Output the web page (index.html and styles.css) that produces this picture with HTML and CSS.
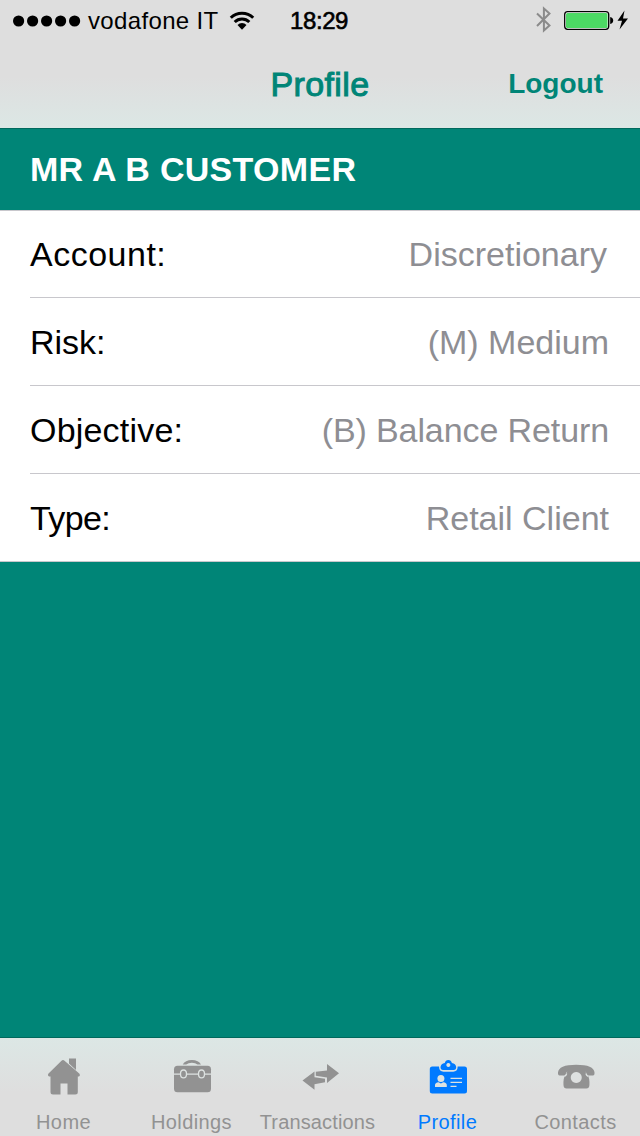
FILE: index.html
```
<!DOCTYPE html>
<html lang="en">
<head>
  <meta charset="UTF-8">
  <title>Profile</title>
  <link rel="stylesheet" href="styles.css">
</head>
<body>

<header class="top">
  <div class="status">
    <div class="carrier">
      <svg class="signal" width="68" height="12" viewBox="0 0 68 12">
        <circle cx="5.6" cy="6" r="5.6"/>
        <circle cx="19.6" cy="6" r="5.6"/>
        <circle cx="33.6" cy="6" r="5.6"/>
        <circle cx="47.6" cy="6" r="5.6"/>
        <circle cx="61.6" cy="6" r="5.6"/>
      </svg>
      <span class="network">vodafone IT</span>
      <svg class="wifi" width="26" height="20" viewBox="0 0 26 20">
        <path d="M1.8 6.8a16 16 0 0 1 22.4 0M5.7 11a10.3 10.3 0 0 1 14.6 0" fill="none" stroke="#000" stroke-width="3"/>
        <path d="M8.5 14a6.3 6.3 0 0 1 9 0L13 18.8z"/>
      </svg>
    </div>
    <div class="clock">18:29</div>
    <div class="power">
      <svg width="96" height="28" viewBox="0 0 96 28">
        <path d="M3 7.5l12.5 12-5.6 5V2.5l5.6 5L3 20" fill="none" stroke="#8b8b8b" stroke-width="2"/>
        <rect x="30.7" y="5.6" width="44" height="17.7" rx="3" fill="#fff" stroke="#000" stroke-width="1.3"/>
        <rect x="32" y="7" width="41.5" height="15" rx="1.5" fill="#4cd964"/>
        <path d="M76.2 11q3 .6 3 3.5t-3 3.5z"/>
        <path d="M90.5 4.5l-7 10.300h4.500L85.500 23.500 94 12.600h-5z"/>
      </svg>
    </div>
  </div>
  <div class="nav">
    <h1>Profile</h1>
    <a class="logout">Logout</a>
  </div>
</header>

<main>
  <h2>MR A B CUSTOMER</h2>
  <ul class="details">
    <li><span class="wide">Account:</span><span class="value nudge">Discretionary</span></li>
    <li><span>Risk:</span><span class="value">(M) Medium</span></li>
    <li><span class="mid">Objective:</span><span class="value tight">(B) Balance Return</span></li>
    <li><span class="narrow">Type:</span><span class="value">Retail Client</span></li>
  </ul>
</main>

<nav class="tabs">
  <a class="tab">
    <svg width="40" height="40" viewBox="0 0 40 40">
      <path d="M25 2.500h7v11.500l-7-6.500z"/>
      <path d="M17.500 4.800Q19 3.400 20.500 4.800L35.500 17.700q1.300 2.800-1.700 2.800V36q0 2.500-2.500 2.500h-7.800V27.500h-7v11H9q-2.500 0-2.500-2.500V20.500Q3 20.500 4.300 17.700z"/>
    </svg>
    <span>Home</span>
  </a>
  <a class="tab">
    <svg width="40" height="40" viewBox="0 0 40 40">
      <path d="M10.700 8.500q2.500-4.500 9.200-4.500t9.100 4.500h-3.500q-2-1.700-5.600-1.700t-5.700 1.700z"/>
      <rect x="2" y="9.700" width="37" height="26.500" rx="3.500"/>
      <path d="M2 18.200h6.300M15 18.200h11M32.500 18.200H39" class="cut"/>
      <ellipse cx="11.500" cy="17.900" rx="3" ry="3.900" class="cut"/>
      <ellipse cx="29.500" cy="17.900" rx="3" ry="3.900" class="cut"/>
    </svg>
    <span>Holdings</span>
  </a>
  <a class="tab">
    <svg width="40" height="40" viewBox="0 0 40 40">
      <path d="M15.800 15.700l11.200-1.200V8L39 17.200 27 27v-5.500l-11.200-1.800z"/>
      <path d="M2.500 24.500L14.500 15.500v5.700l10.500 1.500v3.500l-10.500 2.100v5.500z"/>
    </svg>
    <span class="long">Transactions</span>
  </a>
  <a class="tab active">
    <svg width="40" height="40" viewBox="0 0 40 40">
      <path fill-rule="evenodd" d="M12.500 11q.5-3.500 4.300-4Q17.500 4 20.300 4t3.600 3q3.800.5 4.300 4 0 3-2.500 3H15q-2.500 0-2.500-3zM20.300 7a2 2 0 1 0 .1 0z"/>
      <path d="M4.300 10.500H11q.2 5.200 4.500 5.200h9.700q4.300 0 4.500-5.200H36.500q2.500 0 2.500 2.500v22q0 2.500-2.500 2.500H4.300q-2.500 0-2.500-2.500V13Q1.800 10.500 4.300 10.500z"/>
      <g class="card-info">
        <circle cx="12.900" cy="22.500" r="3.500"/>
        <path d="M7 31v-2q0-2.200 3.600-2.700l2.300 1.300 2.300-1.300q3.600.5 3.600 2.700v2z"/>
        <path d="M22.500 21.700H34v1.200H22.500zM22.500 25.700H34v1.200H22.500zM22.500 29.700h6v1.200h-6z"/>
      </g>
    </svg>
    <span>Profile</span>
  </a>
  <a class="tab">
    <svg width="40" height="40" viewBox="0 0 40 40">
      <path d="M2 16.500Q2.500 8.700 20.200 8.700T38.500 16.500v1q0 2-1.500 2h-5Q30.500 19.500 30 16q-9.800-2.500-19.600 0Q10 19.500 8.500 19.500h-5Q2 19.500 2 17.500z"/>
      <path fill-rule="evenodd" d="M12.500 13.300h15.400q1.500 3 3.500 5 2.500 4 2 11-.3 3.200-3 3.200H10.500q-2.700 0-3-3.200-.5-7 2-11 1.500-2 3-5zM20.200 15.900a5.500 5.500 0 1 0 .1 0z"/>
      <path d="M10.700 17.500q-.5 2-2.300 3M29.900 17.500q.5 2 2.300 3" class="cut"/>
    </svg>
    <span>Contacts</span>
  </a>
</nav>

</body>
</html>
```
FILE: styles.css
```
* {
  box-sizing: border-box;
}
body {
  font-family: "Liberation Sans", Arial, sans-serif;
  background-color: #008577;
  display: flex;
  flex-direction: column;
  height: 1136px;
  margin: 0;
}
h1, h2, ul {
  margin: 0;
  padding: 0;
}
.top {
  height: 129px;
  background: linear-gradient(#dedede 60%, #dce7e5 100%);
  border-bottom: 1px solid #00695d;
}
.status {
  display: grid;
  grid-template-columns: 290px 1fr 96px;
  height: 40px;
  padding-right: 10px;
  font-size: 24px;
  line-height: 40px;
}
.carrier {
  display: flex;
  align-items: center;
  padding-left: 13px;
}
.network {
  margin: 1px 0 0 7px;
  letter-spacing: 0.35px;
}
.wifi {
  margin-left: 10px;
}
.clock {
  padding-top: 1px;
  letter-spacing: -0.4px;
  -webkit-text-stroke: 0.6px #000;
}
.power {
  padding-top: 6px;
  line-height: 0;
}
.nav {
  display: grid;
  grid-template-columns: 1fr 140px 1fr;
  height: 88px;
  align-items: center;
  color: #008577;
}
h1 {
  grid-column: 2;
  font-size: 34px;
  font-weight: normal;
  text-align: center;
  letter-spacing: 0.4px;
  -webkit-text-stroke: 1px #008577;
}
.logout {
  font-size: 28px;
  font-weight: bold;
  text-align: right;
  padding-right: 37px;
}
h2 {
  height: 81px;
  padding-left: 30px;
  color: #fff;
  font-size: 34px;
  line-height: 80px;
  letter-spacing: 0.3px;
}
.details {
  list-style: none;
  background: #fff;
  border-top: 1px solid #c8c7cc;
  font-size: 34px;
}
.details li {
  display: flex;
  justify-content: space-between;
  height: 88px;
  margin-left: 30px;
  padding-right: 31px;
  border-bottom: 1px solid #c8c7cc;
  line-height: 88px;
}
.details li:first-child {
  height: 87px;
  line-height: 86px;
}
.details li:last-child {
  margin-left: 0;
  padding-left: 30px;
}
.value {
  color: #8e8e93;
}
.nudge {
  padding-right: 2px;
}
.wide {
  letter-spacing: 0.5px;
}
.mid {
  letter-spacing: 0.2px;
}
.narrow {
  letter-spacing: -0.6px;
}
.tight {
  letter-spacing: -0.1px;
}
.tabs {
  display: grid;
  grid-template-columns: repeat(5, 128px);
  height: 99px;
  margin-top: auto;
  background: linear-gradient(#dce7e5, #dedede 55%);
  border-top: 1px solid #00695d;
}
.tab {
  display: flex;
  flex-direction: column;
  align-items: center;
  padding-top: 18px;
  color: #929292;
  fill: #929292;
  font-size: 20px;
  line-height: 24px;
  letter-spacing: 0.4px;
}
.tab span {
  margin-top: 14px;
  margin-right: 1px;
}
.tab .long {
  margin-right: 5px;
  letter-spacing: 0.15px;
}
.active {
  color: #007aff;
  fill: #007aff;
}
.cut {
  fill: none;
  stroke: #dde2e1;
  stroke-width: 1.3;
}
.card-info {
  fill: #dde2e1;
}
```
